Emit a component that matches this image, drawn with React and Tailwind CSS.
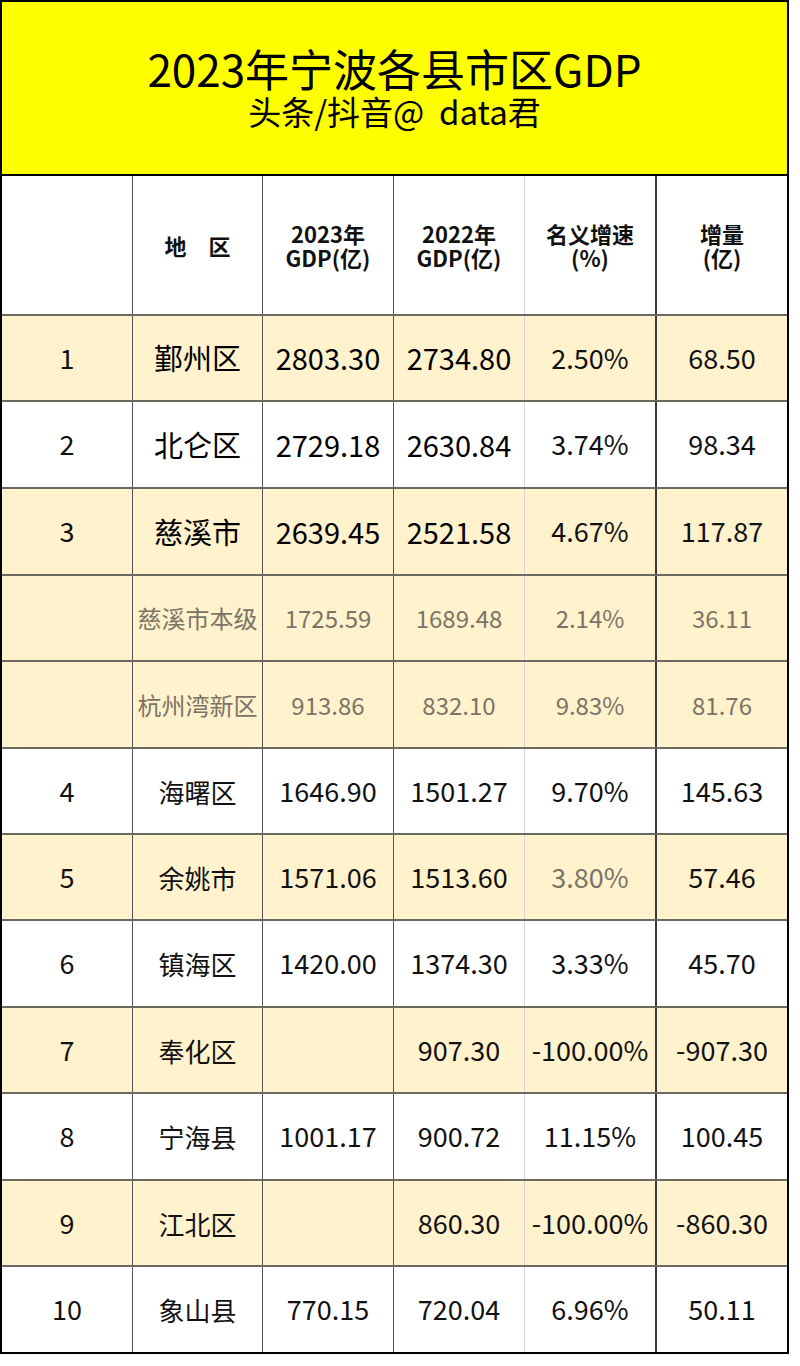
const cols = [
  "w-[131px] border-r border-[#555]",
  "w-[130px] border-r border-[#555]",
  "w-[131px] border-r border-[#555]",
  "w-[131px] border-r border-[#d6d6d6]",
  "w-[132px] border-r-2 border-[#3a3a3a]",
  "w-[130px]",
];

const BEIGE = "bg-[#fff2cc]";
const WHITE = "bg-white";

const rows = [
  { no: "1", name: "鄞州区", a: "2803.30", b: "2734.80", c: "2.50%", d: "68.50", bg: BEIGE, kind: "big", h: "h-[86px]" },
  { no: "2", name: "北仑区", a: "2729.18", b: "2630.84", c: "3.74%", d: "98.34", bg: WHITE, kind: "big", h: "h-[87px]" },
  { no: "3", name: "慈溪市", a: "2639.45", b: "2521.58", c: "4.67%", d: "117.87", bg: BEIGE, kind: "big", h: "h-[87px]" },
  { no: "", name: "慈溪市本级", a: "1725.59", b: "1689.48", c: "2.14%", d: "36.11", bg: BEIGE, kind: "sub", h: "h-[86px]" },
  { no: "", name: "杭州湾新区", a: "913.86", b: "832.10", c: "9.83%", d: "81.76", bg: BEIGE, kind: "sub", h: "h-[87px]" },
  { no: "4", name: "海曙区", a: "1646.90", b: "1501.27", c: "9.70%", d: "145.63", bg: WHITE, kind: "normal", h: "h-[86px]" },
  { no: "5", name: "余姚市", a: "1571.06", b: "1513.60", c: "3.80%", d: "57.46", bg: BEIGE, kind: "normal", h: "h-[86px]", grayC: true },
  { no: "6", name: "镇海区", a: "1420.00", b: "1374.30", c: "3.33%", d: "45.70", bg: WHITE, kind: "normal", h: "h-[87px]" },
  { no: "7", name: "奉化区", a: "", b: "907.30", c: "-100.00%", d: "-907.30", bg: BEIGE, kind: "normal", h: "h-[86px]" },
  { no: "8", name: "宁海县", a: "1001.17", b: "900.72", c: "11.15%", d: "100.45", bg: WHITE, kind: "normal", h: "h-[87px]" },
  { no: "9", name: "江北区", a: "", b: "860.30", c: "-100.00%", d: "-860.30", bg: BEIGE, kind: "normal", h: "h-[86px]" },
  { no: "10", name: "象山县", a: "770.15", b: "720.04", c: "6.96%", d: "50.11", bg: WHITE, kind: "normal", h: "h-[85px]", last: true },
];

const Cell = ({ i, className = "", children }) => (
  <div className={`${cols[i]} h-full flex items-center justify-center whitespace-nowrap ${className}`}>
    {children}
  </div>
);

const Row = ({ r }) => {
  const sub = r.kind === "sub";
  const big = r.kind === "big";
  const main = sub
    ? "text-[24px] text-[#7b7466]"
    : big
    ? "text-[29px] text-black"
    : "text-[27px] text-[#111]";
  const name = sub
    ? "text-[24px] text-[#7b7466]"
    : big
    ? "text-[29px] text-black"
    : "text-[26px] text-[#111]";
  const rest = sub ? "text-[24px] text-[#7b7466]" : "text-[27px] text-[#111]";

  return (
    <div className={`flex ${r.h} ${r.bg} ${r.last ? "" : "border-b-2 border-[#6a6a60]"}`}>
      <Cell i={0} className="text-[27px] text-[#111]">{r.no}</Cell>
      <Cell i={1} className={name}>{r.name}</Cell>
      <Cell i={2} className={main}>{r.a}</Cell>
      <Cell i={3} className={main}>{r.b}</Cell>
      <Cell i={4} className={r.grayC ? "text-[27px] text-[#7b7466]" : rest}>{r.c}</Cell>
      <Cell i={5} className={rest}>{r.d}</Cell>
    </div>
  );
};

export default function App() {
  return (
    <div className="w-[800px] h-[1366px] bg-white font-['Noto_Sans_CJK_SC','Noto_Sans',sans-serif]">
      <div className="w-[789px] border-2 border-black">
        {/* title banner */}
        <div className="h-[174px] bg-[#ffff00] border-b-2 border-black flex flex-col items-center justify-center text-black">
          <div className="text-[44px] leading-[46px]">2023年宁波各县市区GDP</div>
          <div className="text-[33px] leading-[40px] whitespace-pre">头条/抖音@  data君</div>
        </div>

        {/* header row */}
        <div className="flex h-[140px] bg-white border-b-2 border-[#6a6a60] text-[#111] font-bold text-[22px] leading-[24px]">
          <Cell i={0} />
          <Cell i={1}>
            <span className="whitespace-pre">地　区</span>
          </Cell>
          <Cell i={2} className="flex-col">
            <span>2023年</span>
            <span>GDP(亿)</span>
          </Cell>
          <Cell i={3} className="flex-col">
            <span>2022年</span>
            <span>GDP(亿)</span>
          </Cell>
          <Cell i={4} className="flex-col">
            <span>名义增速</span>
            <span>(%)</span>
          </Cell>
          <Cell i={5} className="flex-col">
            <span>增量</span>
            <span>(亿)</span>
          </Cell>
        </div>

        {rows.map((r, idx) => (
          <Row key={idx} r={r} />
        ))}
      </div>
    </div>
  );
}
